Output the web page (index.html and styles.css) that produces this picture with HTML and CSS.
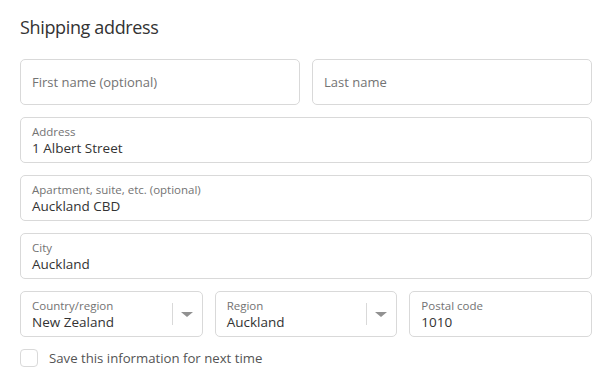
FILE: index.html
```html
<!DOCTYPE html>
<html lang="en">
<head>
    <meta charset="UTF-8">
    <meta name="viewport" content="width=device-width, initial-scale=1.0">
    <title>Shipping address</title>
    <link rel="stylesheet" href="styles.css">
</head>
<body>
    <div class="shipping">
        <h2>Shipping address</h2>

        <div class="row">
            <div class="field empty"><span class="placeholder">First name (optional)</span></div>
            <div class="field empty"><span class="placeholder">Last name</span></div>
        </div>

        <div class="field">
            <span class="label">Address</span>
            <span class="value">1 Albert Street</span>
        </div>

        <div class="field">
            <span class="label">Apartment, suite, etc. (optional)</span>
            <span class="value">Auckland CBD</span>
        </div>

        <div class="field">
            <span class="label">City</span>
            <span class="value">Auckland</span>
        </div>

        <div class="row three">
            <div class="field select">
                <div class="text">
                    <span class="label">Country/region</span>
                    <span class="value">New Zealand</span>
                </div>
                <div class="arrow"></div>
            </div>
            <div class="field select">
                <div class="text">
                    <span class="label">Region</span>
                    <span class="value">Auckland</span>
                </div>
                <div class="arrow"></div>
            </div>
            <div class="field">
                <span class="label">Postal code</span>
                <span class="value">1010</span>
            </div>
        </div>

        <label class="remember">
            <span class="box"></span>
            Save this information for next time
        </label>
    </div>
</body>
</html>
```

FILE: styles.css
```css
body {
    margin: 0;
    background: #fff;
    font-family: "Open Sans", "Noto Sans", sans-serif;
    color: #333;
}
.shipping {
    width: 572px;
    padding: 14px 0 0 20px;
    display: flex;
    flex-direction: column;
    gap: 12px;
}
h2 {
    margin: 0 0 7px;
    font-size: 18px;
    font-weight: 400;
    line-height: 26px;
    letter-spacing: -0.35px;
    color: #333;
}
.row {
    display: grid;
    grid-template-columns: 1fr 1fr;
    gap: 12px;
}
.row.three { grid-template-columns: 1fr 1fr 1fr; }
.field {
    box-sizing: border-box;
    height: 46px;
    border: 1px solid #d9d9d9;
    border-radius: 5px;
    padding: 6px 11px 0;
    display: flex;
    flex-direction: column;
}
.field.empty {
    justify-content: center;
    padding-top: 0;
}
.placeholder {
    font-size: 13px;
    color: #737373;
}
.label {
    font-size: 11.5px;
    line-height: 16px;
    color: #737373;
}
.value {
    font-size: 13.5px;
    line-height: 17px;
    color: #333;
}
.field.select {
    flex-direction: row;
    padding-right: 0;
}
.field.select .text {
    flex: 1;
    display: flex;
    flex-direction: column;
}
.arrow {
    width: 29px;
    height: 22px;
    margin-top: 5px;
    border-left: 1px solid #d9d9d9;
    position: relative;
}
.arrow::after {
    content: "";
    position: absolute;
    left: 8px;
    top: 9px;
    border-left: 6px solid transparent;
    border-right: 6px solid transparent;
    border-top: 5px solid #919191;
}
.remember {
    display: flex;
    align-items: center;
    gap: 11px;
    font-size: 13.2px;
    color: #545454;
    margin-top: 0;
}
.box {
    box-sizing: border-box;
    width: 18px;
    height: 18px;
    border: 1px solid #d9d9d9;
    border-radius: 4px;
}
```
